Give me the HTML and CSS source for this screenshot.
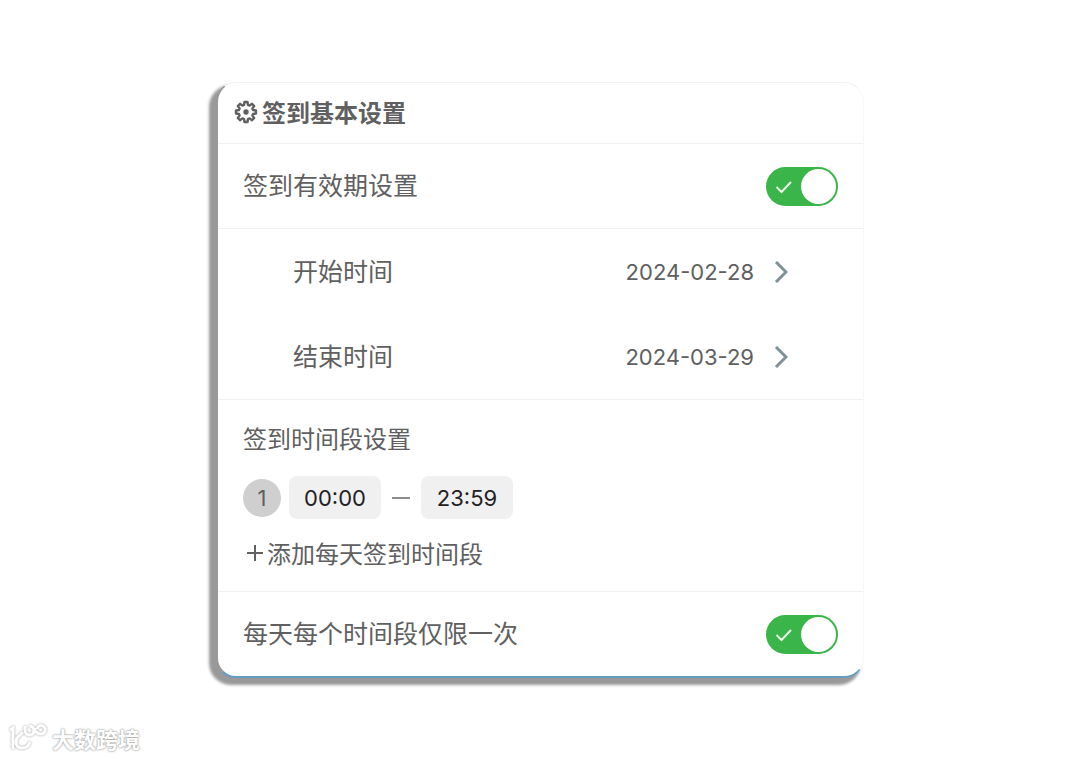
FILE: index.html
```
<!DOCTYPE html>
<html lang="zh-CN">
<head>
  <meta charset="UTF-8">
  <meta name="viewport" content="width=device-width, initial-scale=1">
  <title>签到基本设置</title>
  <link rel="stylesheet" href="styles.css">
</head>
<body>

<form class="card">
  <h1 class="header">
    <svg class="gear" viewBox="0 0 24 24">
      <path d="M10 5 L10.500 2 H13.500 L14 5 L15.600 5.600 L18 3.800 L20.200 6 L18.400 8.400 L19 10 L22 10.500 V13.500 L19 14 L18.400 15.600 L20.200 18 L18 20.200 L15.600 18.400 L14 19 L13.500 22 H10.500 L10 19 L8.400 18.400 L6 20.200 L3.800 18 L5.600 15.600 L5 14 L2 13.500 V10.500 L5 10 L5.600 8.400 L3.800 6 L6 3.800 L8.400 5.600 Z"/>
      <circle cx="12" cy="12" r="2.700"/>
    </svg>
    <span>签到基本设置</span>
  </h1>

  <div class="row">
    <label for="validity">签到有效期设置</label>
    <span class="switch">
      <input type="checkbox" id="validity" checked>
      <svg class="check" viewBox="0 0 18 14"><path d="M1.500 7 L6.500 12 L16 2"/></svg>
    </span>
  </div>

  <div class="dates">
    <div class="date-row">
      <label for="start">开始时间</label>
      <button type="button" class="date" id="start">
        2024-02-28
        <svg class="arrow" viewBox="0 0 14 22"><path d="M2 1 L12 11 L2 21"/></svg>
      </button>
    </div>
    <div class="date-row">
      <label for="end">结束时间</label>
      <button type="button" class="date" id="end">
        2024-03-29
        <svg class="arrow" viewBox="0 0 14 22"><path d="M2 1 L12 11 L2 21"/></svg>
      </button>
    </div>
  </div>

  <div class="periods">
    <h2 class="subtitle">签到时间段设置</h2>
    <div class="period">
      <span class="number">1</span>
      <input type="text" class="time" value="00:00" aria-label="开始">
      <span class="dash"></span>
      <input type="text" class="time" value="23:59" aria-label="结束">
    </div>
    <button type="button" class="add">
      <svg class="plus" viewBox="0 0 16 16"><path d="M0 8 H16 M8 0 V16"/></svg>
      添加每天签到时间段
    </button>
  </div>

  <div class="row">
    <label for="once">每天每个时间段仅限一次</label>
    <span class="switch">
      <input type="checkbox" id="once" checked>
      <svg class="check" viewBox="0 0 18 14"><path d="M1.500 7 L6.500 12 L16 2"/></svg>
    </span>
  </div>
</form>

<footer class="brand">
  <svg class="logo" viewBox="0 0 40 30">
    <path d="M2 7 L5 5 V26 M15 9 L8 16 M9 14 Q6 25 14 25 Q20 25 22 19"/>
    <path d="M17 3 V7 A4.500 4.500 0 1 0 21.500 3 Q24 3 27 7 Q29 11 33 11 A4.200 4.200 0 1 0 29 6"/>
  </svg>
  <span>大数跨境</span>
</footer>

</body>
</html>
```

FILE: styles.css
```
* {
  box-sizing: border-box;
}
body {
  margin: 0;
  min-height: 100vh;
  display: flex;
  flex-direction: column;
  background: #fff;
  color: #606060;
  font-family: 'Noto Sans CJK SC', sans-serif;
  font-size: 25px;
}
svg {
  fill: none;
  stroke: currentColor;
}
button, input {
  font: inherit;
  color: inherit;
}
button {
  padding: 0;
  border: none;
  background: none;
  cursor: pointer;
}
label {
  padding-bottom: 4px;
  line-height: 36px;
}
.card {
  width: 60%;
  min-width: 560px;
  margin: 82px auto 0;
  border-top: 1px solid #f0f2f6;
  border-right: 1px solid #f8f8f8;
  border-bottom: 2px solid #659cc4;
  border-left: 2px solid #999;
  border-radius: 20px;
  background: #fff;
  box-shadow: -5px 5px 3px 2px #999;
}
.header {
  display: flex;
  align-items: center;
  gap: 4px;
  height: 61px;
  margin: 0;
  padding: 0 16px 3px;
  border-bottom: 1px solid #eff1f3;
  font-size: 24px;
}
.gear {
  width: 24px;
  height: 24px;
  stroke-width: 2.4;
  stroke-linejoin: round;
}
.gear circle {
  fill: currentColor;
  stroke: none;
}
.row {
  display: flex;
  align-items: center;
  justify-content: space-between;
  height: 84px;
  padding: 0 25px;
}
.switch {
  position: relative;
  display: flex;
}
.switch input {
  appearance: none;
  width: 72px;
  height: 39px;
  margin: 0;
  border-radius: 20px;
  background: #ccc;
  cursor: pointer;
}
.switch input:checked {
  background: #39b54a;
}
.switch input::before {
  content: '';
  display: block;
  width: 35px;
  height: 35px;
  margin: 2px;
  border-radius: 50%;
  background: #fff;
}
.switch input:checked::before {
  margin-left: 35px;
}
.check {
  position: absolute;
  left: 9px;
  top: 13px;
  width: 18px;
  height: 14px;
  stroke: #e8ffe9;
  stroke-width: 2;
  pointer-events: none;
}
.dates {
  border-top: 1px solid #eff1f3;
  border-bottom: 1px solid #eff1f3;
}
.date-row {
  display: flex;
  align-items: center;
  justify-content: space-between;
  height: 85px;
  padding: 0 75px;
}
.date {
  display: flex;
  align-items: center;
  gap: 20px;
  font-family: Inter, 'Noto Sans', sans-serif;
  font-size: 22px;
}
.arrow {
  width: 14px;
  height: 22px;
  color: #7f9299;
  stroke-width: 3;
}
.periods {
  padding: 20px 25px;
  border-bottom: 1px solid #eff1f3;
  font-size: 24px;
}
.subtitle {
  margin: 0 0 20px;
  font-size: 24px;
  font-weight: normal;
  line-height: 36px;
}
.period {
  display: flex;
  align-items: center;
  gap: 8px;
}
.number {
  width: 38px;
  height: 38px;
  border-radius: 50%;
  background: #cfcfcf;
  font-family: Inter, 'Noto Sans', sans-serif;
  font-size: 22px;
  line-height: 38px;
  text-align: center;
}
.time {
  width: 92px;
  height: 43px;
  padding: 0;
  border: none;
  border-radius: 8px;
  background: #f0f0f0;
  color: #222;
  font-family: Inter, 'Noto Sans', sans-serif;
  font-size: 22px;
  text-align: center;
}
.dash {
  width: 18px;
  height: 2px;
  margin: 0 3px;
  background: #8c8c8c;
}
.add {
  display: flex;
  align-items: center;
  gap: 4px;
  margin-top: 16px;
  padding-left: 4px;
  line-height: 36px;
}
.plus {
  width: 16px;
  height: 16px;
  stroke-width: 2;
}
.brand {
  display: flex;
  align-items: center;
  gap: 4px;
  margin-top: auto;
  padding: 0 8px 5px;
  color: #fff;
  font-size: 22px;
  font-weight: bold;
  text-shadow: 0 0 2px #999, 0 0 2px #aaa;
}
.logo {
  width: 40px;
  height: 30px;
  stroke-width: 3;
  filter: drop-shadow(0 0 1px #999);
}
```
